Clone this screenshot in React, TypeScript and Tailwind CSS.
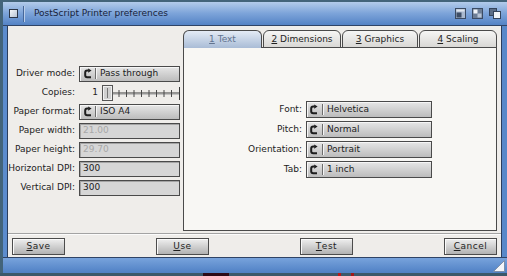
import React from 'react'

const leftRows = [
  { label: 'Driver mode:', kind: 'cycle', value: 'Pass through' },
  { label: 'Copies:', kind: 'slider', value: '1' },
  { label: 'Paper format:', kind: 'cycle', value: 'ISO A4' },
  { label: 'Paper width:', kind: 'disabled', value: '21.00' },
  { label: 'Paper height:', kind: 'disabled', value: '29.70' },
  { label: 'Horizontal DPI:', kind: 'text', value: '300' },
  { label: 'Vertical DPI:', kind: 'text', value: '300' },
]

const textRows = [
  { label: 'Font:', value: 'Helvetica' },
  { label: 'Pitch:', value: 'Normal' },
  { label: 'Orientation:', value: 'Portrait' },
  { label: 'Tab:', value: '1 inch' },
]

const tabs = [
  { key: '1', rest: ' Text', width: 'w-[79px]', active: true },
  { key: '2', rest: ' Dimensions', width: 'w-[78px]', active: false },
  { key: '3', rest: ' Graphics', width: 'w-[76px]', active: false },
  { key: '4', rest: ' Scaling', width: 'w-[78px]', active: false },
]

const buttons = [
  { key: 'S', rest: 'ave' },
  { key: 'U', rest: 'se' },
  { key: 'T', rest: 'est' },
  { key: 'C', rest: 'ancel' },
]

function CycleIcon() {
  return (
    <svg width="10" height="11" viewBox="0 0 10 11">
      <path d="M8 9.2 H4.2 Q2.2 9.2 2.2 7.2 V4.6 Q2.2 2.6 4.2 2.6 H5.6" fill="none" stroke="#1e1e1e" strokeWidth="2" />
      <path d="M5.2 0.4 L8.6 2.6 L5.2 4.8 Z" fill="#1e1e1e" />
    </svg>
  )
}

function CycleField({ value, height }: { value: string; height: string }) {
  return (
    <div className={`flex ${height} items-center border border-[#4a4a4a] bg-gradient-to-b from-[#e6e6e6] to-[#bcbcbc] shadow-[inset_1px_1px_0_#f6f6f6]`}>
      <span className="flex w-[15px] justify-center">
        <CycleIcon />
      </span>
      <span className="h-[11px] w-[2px] border-r border-[#f4f4f4] bg-[#6c6c6c]" />
      <span className="pl-[3px] text-[#1c1c1c]">{value}</span>
    </div>
  )
}

function Slider() {
  const ticks = [18, 25.5, 33, 40.5, 48, 55.5, 63, 70.5]
  return (
    <div className="relative h-[16px] flex-1">
      <svg width="79" height="16" viewBox="0 0 79 16" className="block">
        <line x1="11" y1="8" x2="78" y2="8" stroke="#3a3a3a" strokeWidth="1" />
        <line x1="11" y1="9" x2="78" y2="9" stroke="#9a9a9a" strokeWidth="1" />
        {ticks.map((x) => (
          <line key={x} x1={x} y1="5" x2={x} y2="12" stroke="#4a4a4a" strokeWidth="1" />
        ))}
        <line x1="78.5" y1="2" x2="78.5" y2="15" stroke="#3a3a3a" strokeWidth="1" />
        <rect x="1.5" y="0.5" width="10" height="15" fill="#d0d0d0" stroke="#555" />
        <rect x="2.5" y="1.5" width="8" height="13" fill="none" stroke="#f0f0f0" />
        <line x1="6.5" y1="3" x2="6.5" y2="13" stroke="#777" />
      </svg>
    </div>
  )
}

function TitleGadgets() {
  return (
    <div className="ml-auto mr-[6px] flex items-center gap-[6px]">
      <svg width="11" height="11" viewBox="0 0 11 11">
        <rect x="0.5" y="0.5" width="10" height="10" fill="#a9b9cf" stroke="#3b4b63" />
        <rect x="1.5" y="4.5" width="5" height="5" fill="#3d4d66" />
        <rect x="1.5" y="1.5" width="8" height="2" fill="#dfe6ef" />
      </svg>
      <svg width="11" height="11" viewBox="0 0 11 11">
        <rect x="0.5" y="0.5" width="10" height="10" fill="#6d7e96" stroke="#3b4b63" />
        <rect x="1.5" y="1.5" width="4" height="4" fill="#f2f5f9" />
        <rect x="5.5" y="5.5" width="4" height="4" fill="#b7c4d6" />
      </svg>
      <svg width="12" height="11" viewBox="0 0 12 11">
        <rect x="0.5" y="0.5" width="7" height="7" fill="#5c6e88" stroke="#34445c" />
        <rect x="4.5" y="3.5" width="7" height="7" fill="#f1f4f8" stroke="#34445c" />
      </svg>
    </div>
  )
}

export default function App() {
  return (
    <div className="flex h-[276px] w-[507px] flex-col overflow-hidden bg-[#3b586a] font-['DejaVu_Sans',sans-serif] text-[9px] leading-none text-[#1f1f1f]">
      {/* window */}
      <div className="flex h-[273px] flex-col border-l-[3px] border-t-[2px] border-[#43647a]">
        {/* title bar */}
        <div className="flex h-[24px] items-center border-b border-[#2f4466] bg-gradient-to-b from-[#b3cbea] via-[#7ca3d9] to-[#5483c5]">
          <div className="ml-[6px] h-[9px] w-[9px] border border-[#2c3648] bg-gradient-to-br from-[#f4f6f9] to-[#b8c4d4]" />
          <div className="ml-[5px] h-[16px] w-[2px] border-r border-[#b9cde9] bg-[#46679a]" />
          <span className="ml-[9px] text-[#18233a]">PostScript Printer preferences</span>
          <TitleGadgets />
        </div>

        <div className="flex flex-1">
          <div className="w-[5px] border-r border-[#2a3d5c] bg-[#5c8ccd]" />

          {/* body */}
          <div className="flex w-[493px] flex-col bg-[#efedea] px-[4px] pt-[4px]">
            <div className="flex h-[201px] gap-[3px]">
              {/* left column */}
              <div className="flex w-[168px] items-center">
                <div className="grid w-full grid-cols-[63px_101px] gap-x-[4px] gap-y-[3px]">
                  {leftRows.map((row) => (
                    <React.Fragment key={row.label}>
                      <span className="flex h-[16px] items-center justify-end whitespace-nowrap text-[#222]">
                        {row.label}
                      </span>
                      {row.kind === 'cycle' && <CycleField value={row.value} height="h-[16px]" />}
                      {row.kind === 'slider' && (
                        <div className="flex h-[16px] items-center gap-[3px]">
                          <span className="w-[19px] text-right">{row.value}</span>
                          <Slider />
                        </div>
                      )}
                      {(row.kind === 'text' || row.kind === 'disabled') && (
                        <div
                          className={`flex h-[16px] items-center border border-[#4a4a4a] bg-[#d6d6d6] px-[3px] shadow-[inset_1px_1px_0_#a4a4a4] ${
                            row.kind === 'disabled' ? 'text-[#a8a8a8]' : 'text-[#1c1c1c]'
                          }`}
                        >
                          {row.value}
                        </div>
                      )}
                    </React.Fragment>
                  ))}
                </div>
              </div>

              {/* tabbed group */}
              <div className="flex w-[314px] flex-col">
                <div className="relative z-10 -mb-px flex gap-px">
                  {tabs.map((tab) =>
                    tab.active ? (
                      <div
                        key={tab.key}
                        className={`${tab.width} flex h-[18px] items-center justify-center rounded-t-[6px] border border-b-0 border-[#4a4a4a] bg-gradient-to-b from-[#e4ebf5] to-[#a9bcd6] text-[#627490]`}
                      >
                        <span className="underline underline-offset-1">{tab.key}</span>
                        <span className="whitespace-pre">{tab.rest}</span>
                      </div>
                    ) : (
                      <div
                        key={tab.key}
                        className={`${tab.width} flex h-[18px] items-center justify-center rounded-t-[6px] border border-[#4a4a4a] bg-gradient-to-b from-[#f6f6f5] to-[#d9d8d5] text-[#1f1f1f]`}
                      >
                        <span className="underline underline-offset-1">{tab.key}</span>
                        <span className="whitespace-pre">{tab.rest}</span>
                      </div>
                    ),
                  )}
                </div>
                <div className="flex flex-1 items-center justify-center border border-[#4a4a4a] bg-[#f8f7f4]">
                  <div className="grid grid-cols-[auto_126px] gap-x-[4px] gap-y-[3px]">
                    {textRows.map((row) => (
                      <React.Fragment key={row.label}>
                        <span className="flex h-[17px] items-center justify-end whitespace-nowrap text-[#222]">
                          {row.label}
                        </span>
                        <CycleField value={row.value} height="h-[17px]" />
                      </React.Fragment>
                    ))}
                  </div>
                </div>
              </div>
            </div>

            {/* separator */}
            <div className="-mx-[4px] mt-[2px] h-[2px] border-b border-[#fbfbfb] bg-[#a3a3a3]" />

            {/* buttons */}
            <div className="mt-[3px] flex justify-between">
              {buttons.map((b) => (
                <div
                  key={b.key}
                  className="flex h-[17px] w-[53px] items-center justify-center border border-[#4c4c4c] bg-gradient-to-b from-[#efefef] to-[#b2b2b2] tracking-[0.5px] text-[#1f1f1f] shadow-[inset_1px_1px_0_#fafafa]"
                >
                  <span className="underline underline-offset-1">{b.key}</span>
                  <span>{b.rest}</span>
                </div>
              ))}
            </div>
          </div>

          <div className="w-[6px] border-l border-[#2a3d5c] bg-[#5888c9]" />
        </div>

        {/* bottom bar */}
        <div className="flex h-[16px] items-end justify-end border-t border-[#2f4466] bg-gradient-to-b from-[#78a3dc] to-[#4f80c4] pb-[1px] pr-[2px]">
          <svg width="12" height="12" viewBox="0 0 12 12">
            <path d="M11.5 0.5 V11.5 H0.5 Z" fill="#f4f6fa" stroke="#7d8ea8" />
          </svg>
        </div>
      </div>

      {/* desktop strip */}
      <div className="flex h-[3px]">
        <div className="ml-[203px] w-[26px] bg-[#2c0a16]" />
        <div className="ml-[109px] w-[3px] bg-[#b81a1a]" />
        <div className="ml-[10px] w-[3px] bg-[#a01818]" />
      </div>
    </div>
  )
}
